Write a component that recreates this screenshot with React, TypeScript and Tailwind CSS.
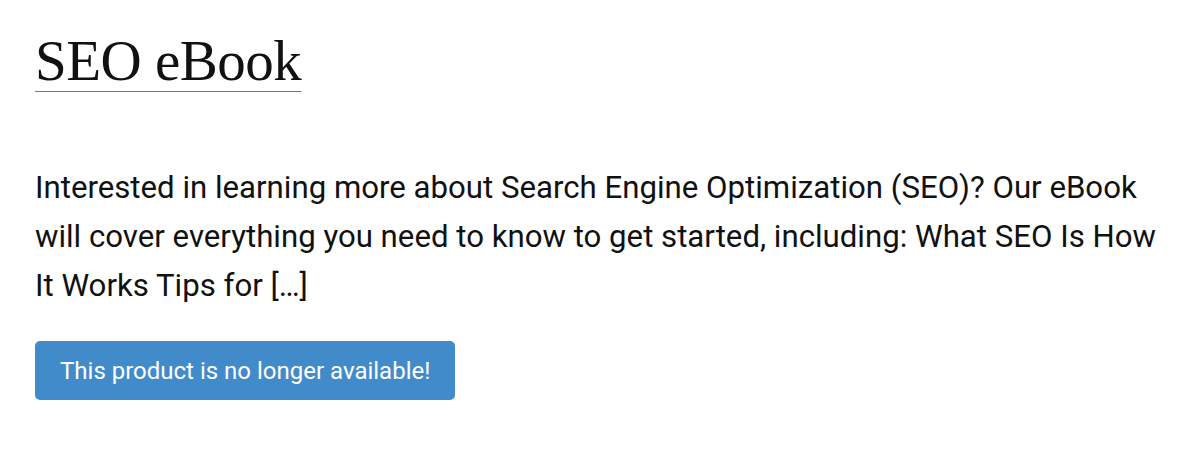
export default function App() {
  return (
    <div className="min-h-[462px] bg-white px-[35px] pt-[26px] font-['Roboto',sans-serif] text-[#111]">
      <h1 className="font-['Liberation_Serif',serif] text-[57px] leading-[70px] font-normal tracking-[-0.5px] text-[#111]">
        <a href="#" className="underline decoration-[#777] decoration-1 underline-offset-[11px]">
          SEO eBook
        </a>
      </h1>
      <p className="mt-[67px] text-[31.2px] leading-[49px]">
        Interested in learning more about Search Engine Optimization (SEO)? Our eBook will cover everything
        you need to know to get started, including: What SEO Is How It Works Tips for […]
      </p>
      <button className="mt-[31px] h-[59px] rounded-[5px] bg-[#428bca] px-[25px] text-[24px] text-white">
        This product is no longer available!
      </button>
    </div>
  );
}
